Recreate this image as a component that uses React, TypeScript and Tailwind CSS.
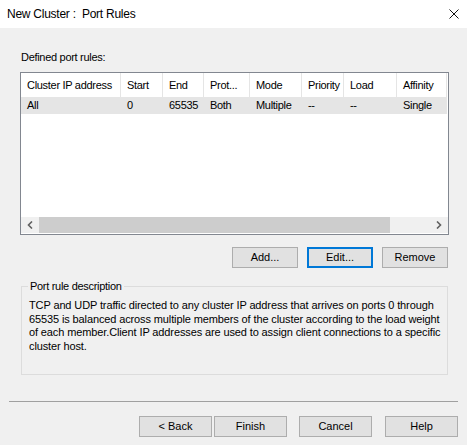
import React from "react";

const font = { fontFamily: '"Liberation Sans", Arial, sans-serif' };

function Btn({ label, w, focused }: { label: string; w: string; focused?: boolean }) {
  return (
    <div
      className={`${w} h-[21px] flex items-center justify-center bg-[#e1e1e1] text-[11px] text-black ${
        focused ? "border-2 border-[#0078d7]" : "border border-[#adadad]"
      }`}
    >
      {label}
    </div>
  );
}

const cols: { label: string; w: string; val: string }[] = [
  { label: "Cluster IP address", w: "w-[100px]", val: "All" },
  { label: "Start", w: "w-[42px]", val: "0" },
  { label: "End", w: "w-[41px]", val: "65535" },
  { label: "Prot...", w: "w-[46px]", val: "Both" },
  { label: "Mode", w: "w-[52px]", val: "Multiple" },
  { label: "Priority", w: "w-[42px]", val: "--" },
  { label: "Load", w: "w-[53px]", val: "--" },
  { label: "Affinity", w: "w-[50px]", val: "Single" },
];

export default function App() {
  return (
    <div className="w-[467px] h-[445px] flex flex-col overflow-hidden tracking-[-0.3px]" style={font}>
      <div className="h-[28px] bg-white flex items-center justify-between pl-[7px] pr-[8px]">
        <span className="text-[12px] text-black tracking-[-0.25px]">New Cluster :&nbsp; Port Rules</span>
        <svg width="10" height="10" viewBox="0 0 10 10">
          <path d="M0.5 0.5 L9.5 9.5 M9.5 0.5 L0.5 9.5" stroke="#111" strokeWidth="1" />
        </svg>
      </div>
      <div className="flex-1 bg-[#f0f0f0] flex flex-col text-[11px] text-black">
        <div className="pl-[21px] mt-[23px] h-[13px] leading-[13px]">Defined port rules:</div>
        <div className="ml-[20px] mt-[8px] w-[429px] h-[163px] border border-[#828790] bg-white flex flex-col">
          <div className="h-[24px] flex">
            {cols.map((c) => (
              <div
                key={c.label}
                className={`${c.w} shrink-0 h-full border-r border-[#e5e5e5] flex items-center pl-[6px] whitespace-nowrap overflow-hidden`}
              >
                {c.label}
              </div>
            ))}
          </div>
          <div className="h-[17px] flex bg-[#e5e5e5] mr-[1px]">
            {cols.map((c) => (
              <div key={c.label} className={`${c.w} shrink-0 flex items-center pl-[6px] whitespace-nowrap`}>
                {c.val}
              </div>
            ))}
          </div>
          <div className="flex-1" />
          <div className="h-[16px] bg-[#f0f0f0] flex items-center mb-[1px]">
            <div className="w-[18px] h-full flex items-center justify-center">
              <svg width="6" height="8" viewBox="0 0 6 8">
                <path d="M5 0.5 L1.5 4 L5 7.5" stroke="#606060" strokeWidth="1.6" fill="none" />
              </svg>
            </div>
            <div className="w-[351px] h-full bg-[#cdcdcd]" />
            <div className="flex-1" />
            <div className="w-[18px] h-full flex items-center justify-center">
              <svg width="6" height="8" viewBox="0 0 6 8">
                <path d="M1 0.5 L4.5 4 L1 7.5" stroke="#606060" strokeWidth="1.6" fill="none" />
              </svg>
            </div>
          </div>
        </div>
        <div className="mt-[12px] w-[448px] flex justify-end gap-[9px] tracking-normal">
          <Btn label="Add..." w="w-[66px]" />
          <Btn label="Edit..." w="w-[66px]" focused />
          <Btn label="Remove" w="w-[66px]" />
        </div>
        <div className="relative ml-[21px] mt-[18px] w-[427px] h-[89px] border border-[#dcdcdc]">
          <div className="absolute left-[6px] top-[-8px] px-[2px] bg-[#f0f0f0] leading-[14px]">
            Port rule description
          </div>
          <div className="pl-[7px] pt-[12px] leading-[13.7px] whitespace-nowrap tracking-[-0.12px]">
            <div>TCP and UDP traffic directed to any cluster IP address that arrives on ports 0 through</div>
            <div>65535 is balanced across multiple members of the cluster according to the load weight</div>
            <div>of each member.Client IP addresses are used to assign client connections to a specific</div>
            <div>cluster host.</div>
          </div>
        </div>
        <div className="ml-[9px] mt-[26px] w-[449px] h-px bg-[#a0a0a0]" />
        <div className="mt-[14px] w-[458px] flex justify-end tracking-normal">
          <Btn label="< Back" w="w-[73px]" />
          <div className="w-[2px]" />
          <Btn label="Finish" w="w-[73px]" />
          <div className="w-[12px]" />
          <Btn label="Cancel" w="w-[73px]" />
          <div className="w-[13px]" />
          <Btn label="Help" w="w-[73px]" />
        </div>
      </div>
    </div>
  );
}
